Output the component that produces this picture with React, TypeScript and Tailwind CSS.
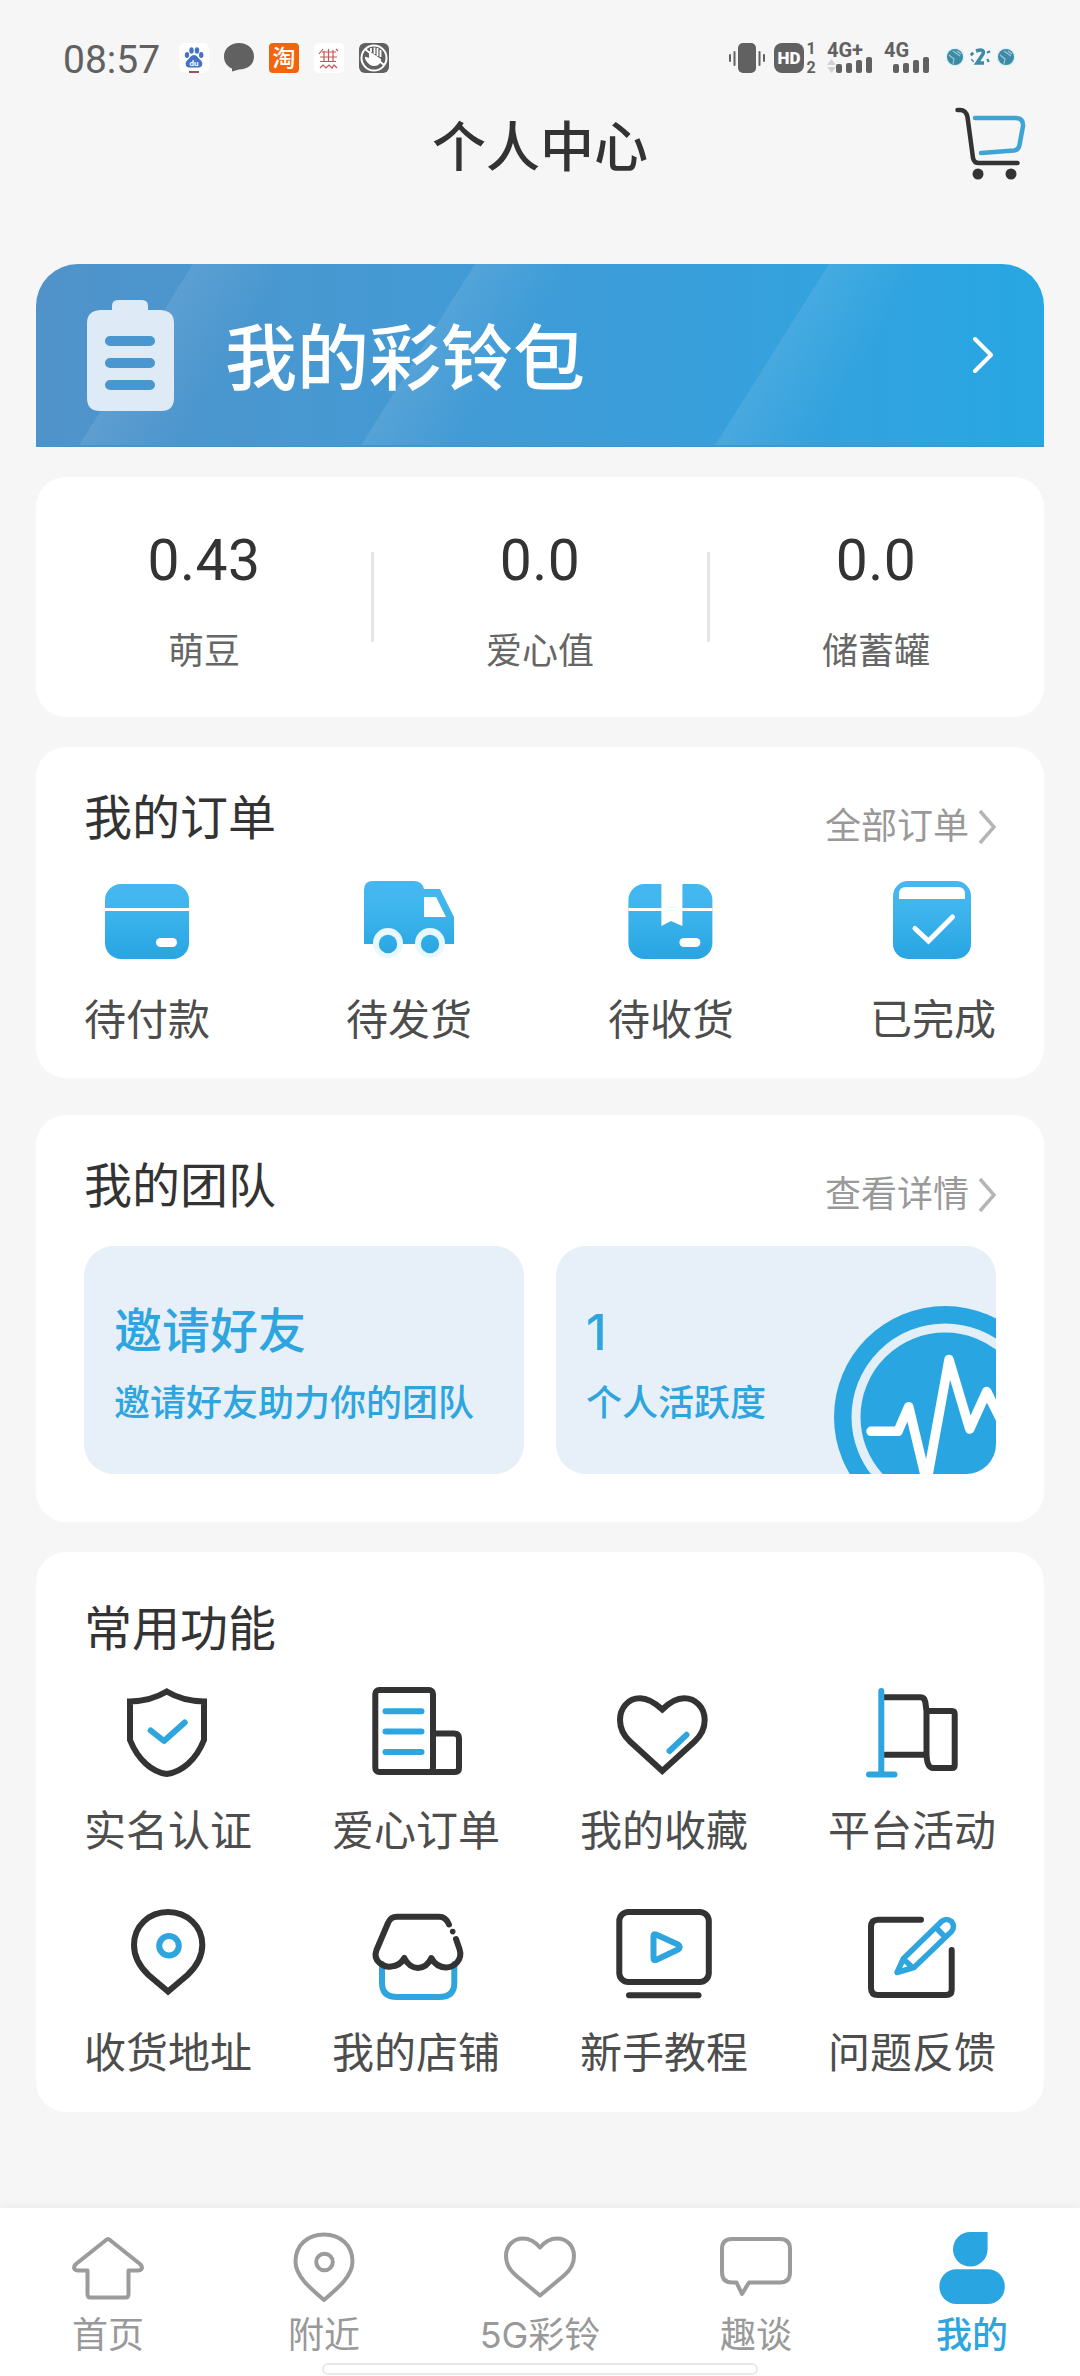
import type { ReactNode } from "react";
import clsx from "clsx";

const DARK = "#333333";
const BLUE = "#2ea5df";

interface IconItem {
  label: string;
  icon: ReactNode;
}

function LineIcon({ children }: { children: ReactNode }) {
  return (
    <svg
      viewBox="0 0 100 100"
      className="h-[100px] w-[100px]"
      fill="none"
      stroke={DARK}
      strokeWidth="6"
      strokeLinecap="round"
      strokeLinejoin="round"
    >
      {children}
    </svg>
  );
}

function OrderIcon({ children }: { children: ReactNode }) {
  return (
    <svg viewBox="0 0 90 90" className="h-[90px] w-[90px]" fill="url(#order-fill)">
      <defs>
        <linearGradient id="order-fill" gradientUnits="userSpaceOnUse" x1="0" y1="5" x2="0" y2="83">
          <stop offset="0" stopColor="#46b7f0" />
          <stop offset="0.3" stopColor="#41b6ee" />
          <stop offset="1" stopColor="#27a5e2" />
        </linearGradient>
      </defs>
      {children}
    </svg>
  );
}

function TabIcon({ children }: { children: ReactNode }) {
  return (
    <svg
      viewBox="0 0 72 72"
      className="h-[72px] w-[72px]"
      fill="none"
      stroke="#9b9b9b"
      strokeWidth="4"
      strokeLinejoin="round"
    >
      {children}
    </svg>
  );
}

const stats = [
  { value: "0.43", label: "萌豆" },
  { value: "0.0", label: "爱心值" },
  { value: "0.0", label: "储蓄罐" },
];

const orders: IconItem[] = [
  {
    label: "待付款",
    icon: (
      <OrderIcon>
        <rect x="3" y="8" width="84" height="75" rx="16" />
        <rect x="3" y="32" width="84" height="3" fill="#fff" />
        <rect x="54" y="62" width="21" height="9" rx="4.5" fill="#fff" />
      </OrderIcon>
    ),
  },
  {
    label: "待发货",
    icon: (
      <OrderIcon>
        <path d="M0 68V14Q0 5 9 5H50Q58 5 60 13H76L90 41V68Z" />
        <path d="M60 21H72L82 41H60Z" fill="#fff" />
        <circle cx="24" cy="67" r="15" fill="#e9f7fe" />
        <circle cx="66" cy="67" r="15" fill="#e9f7fe" />
        <circle cx="24" cy="68" r="9.2" />
        <circle cx="66" cy="68" r="9.2" />
      </OrderIcon>
    ),
  },
  {
    label: "待收货",
    icon: (
      <OrderIcon>
        <rect x="2.4" y="8" width="84" height="75" rx="16" />
        <rect x="2.4" y="32" width="84" height="3" fill="#fff" />
        <path d="M35.4 7H56.4V50L45 45L35.4 50Z" fill="#fff" />
        <rect x="53.4" y="62" width="21" height="9" rx="4.5" fill="#fff" />
      </OrderIcon>
    ),
  },
  {
    label: "已完成",
    icon: (
      <OrderIcon>
        <rect x="5" y="5" width="78" height="78" rx="15" />
        <path d="M11 23V18Q11 11 18 11H70Q77 11 77 18V23Z" fill="#fff" />
        <path
          d="M27 52.5L40.5 65L64.5 41"
          fill="none"
          stroke="#fff"
          strokeWidth="5"
          strokeLinecap="round"
        />
      </OrderIcon>
    ),
  },
];

const features: IconItem[] = [
  {
    label: "实名认证",
    icon: (
      <LineIcon>
        <path
          d="M48.7 11.5Q33 21 12 21.5V60C20 80 34 92 48.7 94C64 92 78 80 86 60V21.5Q64.5 21 48.7 11.5Z"
          strokeLinejoin="miter"
        />
        <path d="M32.7 50.5L46 61L66.7 42.5" stroke={BLUE} />
      </LineIcon>
    ),
  },
  {
    label: "爱心订单",
    icon: (
      <LineIcon>
        <rect x="9.3" y="10" width="57.7" height="82" rx="4" />
        <path d="M67 53.5H88Q93 53.5 93 58.5V88Q93 92 89 92H62" />
        <path d="M19.5 31.3H55.5M19.5 51.6H55.5M19.5 72H55.5" stroke={BLUE} />
      </LineIcon>
    ),
  },
  {
    label: "我的收藏",
    icon: (
      <LineIcon>
        <path
          d="M48.3 29.5C40 22 32 18.3 26 18.3C14 18.3 6 28 6 40C6 48 9 55 16 61.5L48.3 91L80.6 61.5C87.6 55 90.7 48 90.7 40C90.7 28 82 18.3 70 18.3C64 18.3 56 22 48.3 29.5Z"
          strokeLinejoin="miter"
        />
        <path d="M55.5 71L72.5 54.8" stroke={BLUE} />
      </LineIcon>
    ),
  },
  {
    label: "平台活动",
    icon: (
      <LineIcon>
        <path d="M23 17.3H58.5Q62.500 17.3 63.3 22L64.5 31V74.5Q65 88 71 88H90Q92.7 88 92.7 85V34Q92.7 31 90 31H65M23 74.7H64" />
        <path d="M19.3 11V94.5M7 94.5H32.5" stroke={BLUE} />
      </LineIcon>
    ),
  },
  {
    label: "收货地址",
    icon: (
      <LineIcon>
        <path
          d="M50 89.5L30.5 73C21 64 16 54 16 43C16 24 31 10 50 10C69 10 84.3 24 84.3 43C84.3 54 79 64 69.5 73Z"
          strokeLinejoin="miter"
        />
        <circle cx="51" cy="43.8" r="9.8" stroke={BLUE} />
      </LineIcon>
    ),
  },
  {
    label: "我的店铺",
    icon: (
      <LineIcon>
        <path d="M16 62V81Q16 95 31 95H73.3Q88.3 95 88.3 81V62" stroke={BLUE} />
        <path d="M83 22.5Q80 14.7 73 14.7H31Q24.5 14.7 22 21L10.5 48C6 60 19 65.5 25 64.5Q34 64 38.3 56Q43 65.5 52 66Q61 65.5 65.3 56Q70 65 80 65.5C88 65.5 97 58 93.5 47L90 37" />
        <circle cx="86.7" cy="29.6" r="2.8" fill={DARK} stroke="none" />
      </LineIcon>
    ),
  },
  {
    label: "新手教程",
    icon: (
      <LineIcon>
        <rect x="5.3" y="10" width="89.5" height="70" rx="9" />
        <path d="M15 93.3H84.5" />
        <path d="M42 32.5Q39.5 31.5 39.5 34V56Q39.5 59 42 58L64 47.5Q67.5 45 64 42.5Z" stroke={BLUE} />
      </LineIcon>
    ),
  },
  {
    label: "问题反馈",
    icon: (
      <LineIcon>
        <path d="M59 17.7H16Q9 17.7 9 25V86Q9 93 16 93H84Q89.7 93 89.7 88V48" />
        <path
          d="M35 70.5L41.5 56.5L79.5 19.5Q84.5 15.5 89.5 19.5Q93.5 24.5 89.5 29.5L52 65.5ZM74 25.5L83 35M43 58.5L50 65"
          stroke={BLUE}
          strokeWidth="5.5"
        />
      </LineIcon>
    ),
  },
];

const tabs = [
  {
    label: "首页",
    icon: (
      <TabIcon>
        <path d="M36 7Q35 7 33.5 8.5L4 32C0 36 3 38.5 6 38.5H15.5V62Q15.5 65.5 18.5 65.5H53.5Q56.5 65.5 56.5 62V38.5H66C69 38.5 72 36 68 32L38.5 8.5Q37 7 36 7Z" />
      </TabIcon>
    ),
  },
  {
    label: "附近",
    icon: (
      <TabIcon>
        <path d="M36 68C22 56 7.5 44 7.5 29.5C7.5 13 20 2.5 36 2.5C52 2.5 64.5 13 64.5 29.5C64.5 44 50 56 36 68Z" />
        <circle cx="36.5" cy="30" r="8.3" />
      </TabIcon>
    ),
  },
  {
    label: "5G彩铃",
    icon: (
      <TabIcon>
        <path d="M36 15.5C31 9.5 25 6.5 19 6.5C9 6.5 2 14 2 24C2 33 6 38.5 12 43.5L36 63.5L60 43.5C66 38.5 70 33 70 24C70 14 63 6.5 53 6.5C47 6.5 41 9.5 36 15.5Z" />
      </TabIcon>
    ),
  },
  {
    label: "趣谈",
    icon: (
      <TabIcon>
        <path d="M12 7H60Q70 7 70 17V40Q70 50.5 60 50.5H29L22 62L16.5 50.5H12Q2 50.5 2 40V17Q2 7 12 7Z" />
      </TabIcon>
    ),
  },
  {
    label: "我的",
    active: true,
    icon: (
      <TabIcon>
        <g fill="#29a6e2" stroke="none">
          <path d="M51.6 0V17A17.3 17.3 0 1 1 34.3 0Z" />
          <rect x="3.4" y="37.3" width="65.4" height="34.7" rx="17" />
        </g>
      </TabIcon>
    ),
  },
];

function SignalBars() {
  return (
    <div className="flex items-end gap-[4px]">
      <i className="h-[9px] w-[6px] rounded-[2px] bg-[#616161]" />
      <i className="h-[10px] w-[6px] rounded-[2px] bg-[#616161]" />
      <i className="h-[13px] w-[6px] rounded-[2px] bg-[#616161]" />
      <i className="h-[16px] w-[6px] rounded-[2px] bg-[#616161]" />
    </div>
  );
}

function StatusBar() {
  return (
    <div className="flex h-[90px] items-start justify-between pt-[43px] pr-[60px] pl-[63px] text-[#616161]">
      <div className="flex gap-[15px]">
        <span className="mr-[5px] w-[96px] text-[39px] leading-[35px]">08:57</span>
        <svg viewBox="0 0 30 30" className="h-[30px] w-[30px]">
          <rect width="30" height="30" rx="6" fill="#fff" />
          <g fill="#4472c4">
            <ellipse cx="8" cy="12" rx="2.2" ry="3" />
            <ellipse cx="12.5" cy="7.5" rx="2.2" ry="3.2" />
            <ellipse cx="18" cy="7.5" rx="2.2" ry="3.2" />
            <ellipse cx="22.2" cy="12" rx="2.2" ry="3" />
            <path d="M15 12C18 12 19 15 21.5 17C25 20 23 25 19.5 24.5H10.5C7 25 5 20 8.5 17C11 15 12 12 15 12Z" />
          </g>
          <text x="15" y="22.5" fontSize="8" fontWeight="700" textAnchor="middle" fill="#fff">du</text>
          <rect x="10" y="28" width="10" height="2" fill="#a0525c" />
        </svg>
        <svg viewBox="0 0 30 30" className="h-[30px] w-[30px]" fill="#616161">
          <path d="M15 0C23.5 0 30 5.5 30 13.5C30 21.5 23.5 26.5 15 26.5L8 28.5V25.5C3 23.5 0 19 0 13.5C0 5.5 6.500 0 15 0Z" />
        </svg>
        <div className="flex h-[30px] w-[30px] items-center justify-center rounded-[4px] bg-[#f4640a] pt-[2px] text-[23px] leading-[28px] font-medium text-white">
          淘
        </div>
        <svg viewBox="0 0 30 30" className="h-[30px] w-[30px]">
          <rect width="30" height="30" rx="5" fill="#fff" />
          <g fill="none" stroke="#c8545a" strokeWidth="1.2">
            <path d="M9 6L5 11M8 9H22M6 14H23M6 18.5H22M10 8V18M14.5 6V19M19 7V19M22 6L24 8" />
            <path d="M6 25L9 22L12 25L15 22L18 25L20 22L23 25" />
          </g>
        </svg>
        <svg viewBox="0 0 30 30" className="h-[30px] w-[30px]" fill="none" stroke="#fff">
          <rect width="30" height="30" rx="6" fill="#616161" stroke="none" />
          <circle cx="15" cy="15" r="12.5" strokeWidth="2" />
          <path d="M10 13C11 17 7 13 6 14C5 16 10 23 15 23C20 23 22 20 22 16L10 8Z" fill="#fff" stroke="none" />
          <path d="M12 9V5M15.5 11V4.5M18.5 13V5M21.5 14V7M6 6L25 22" strokeWidth="1.8" />
        </svg>
      </div>

      <div className="flex w-[291px]">
        <svg viewBox="0 0 36 30" className="h-[30px] w-[36px]" fill="#616161">
          <rect x="9" width="18" height="30" rx="5" />
          <rect x="0" y="11" width="2" height="8" rx="1" />
          <rect x="4.5" y="8" width="2" height="15" rx="1" />
          <rect x="29.5" y="8" width="2" height="15" rx="1" />
          <rect x="34" y="11" width="2" height="8" rx="1" />
        </svg>
        <div className="ml-[9px] flex h-[30px] w-[30px] items-center justify-center rounded-[8px] bg-[#616161] text-[17px] leading-none font-black text-white">
          HD
        </div>
        <div className="-mt-[4px] ml-[2px] flex w-[10px] flex-col items-center text-[16px] leading-[19px] font-bold">
          <span>1</span>
          <span>2</span>
        </div>
        <div className="ml-[11px] flex h-[30px] w-[46px] flex-col justify-between">
          <span className="text-[20px] leading-[14px] font-bold">4G+</span>
          <div className="flex items-end justify-between pr-[1px]">
            <svg viewBox="0 0 9 14" className="h-[14px] w-[9px]" fill="#d2d2d2">
              <path d="M4.5 0L9 6H0ZM4.5 14L9 8H0Z" />
            </svg>
            <SignalBars />
          </div>
        </div>
        <div className="ml-[11px] flex h-[30px] w-[45px] flex-col justify-between">
          <span className="text-[20px] leading-[14px] font-bold">4G</span>
          <div className="flex justify-end">
            <SignalBars />
          </div>
        </div>
        <svg viewBox="0 0 72 30" className="ml-[16px] h-[30px] w-[72px]" fill="none">
          <circle cx="10" cy="14" r="9.5" fill="#daf1f5" />
          <circle cx="10" cy="14" r="8" fill="#3d8aa5" />
          <circle cx="61" cy="14" r="9.5" fill="#daf1f5" />
          <circle cx="61" cy="14" r="8" fill="#3d8aa5" />
          <path
            d="M4 12L9 16L8 21M8 8L15 13M12 8L16 11M55 12L60 16L59 21M59 8L66 13M63 8L67 11"
            stroke="#9cc8d4"
            strokeWidth="1.2"
          />
          <path d="M31 8Q40 5 38 11L32 20H39M43 8L44 10M42 18L44 17M26 10L28 12M27 18L28 17" stroke="#3d8aa5" strokeWidth="3.5" />
        </svg>
      </div>
    </div>
  );
}

function CartIcon() {
  return (
    <svg
      viewBox="0 0 80 80"
      className="h-[80px] w-[80px]"
      fill="none"
      strokeWidth="4.5"
      strokeLinecap="round"
      strokeLinejoin="round"
    >
      <path d="M7.5 6H10Q16 6 17.5 13L23 54Q24 59 29 59H67.5" stroke={DARK} />
      <path d="M25 14H66Q73.5 14.5 73 22L69.5 41Q68.5 46 64 46.5L31 49" stroke="#3ea4d6" />
      <circle cx="28" cy="70" r="5.5" fill={DARK} />
      <circle cx="61" cy="70" r="5.5" fill={DARK} />
    </svg>
  );
}

function RingtoneBanner() {
  return (
    <div className="relative flex h-[183px] items-center overflow-hidden rounded-t-[42px] border-b-2 border-[#4298cc] bg-linear-to-r from-[#5093ca] via-[#3a9eda] via-60% to-[#27a7e3]">
      <svg viewBox="0 0 1008 183" className="absolute inset-0 h-[183px] w-[1008px]">
        <defs>
          <linearGradient id="shine" gradientUnits="userSpaceOnUse" x1="57.5" y1="91.5" x2="127" y2="135">
            <stop offset="0" stopColor="#fff" stopOpacity="0.09" />
            <stop offset="1" stopColor="#fff" stopOpacity="0" />
          </linearGradient>
        </defs>
        {[42, 324, 678].map((x) => (
          <path key={x} d="M115 0L0 183H200L315 0Z" transform={`translate(${x} 0)`} fill="url(#shine)" />
        ))}
      </svg>
      <svg viewBox="0 0 88 112" className="relative mt-[2px] ml-[51px] h-[112px] w-[88px]">
        <path
          d="M8 10H25V6Q25 0 31 0H55Q61 0 61 6V10H74Q87 11 87 23V98Q87 111 74 111H13Q0 111 0 98V23Q0 11 13 10Z"
          fill="#deeaf5"
        />
        <path d="M23 41H63M23 63H63M23 85H63" stroke="#4a97d0" strokeWidth="10" strokeLinecap="round" />
      </svg>
      <span className="relative ml-[50px] pt-[11px] text-[72px] leading-[90px] font-medium text-white">
        我的彩铃包
      </span>
      <svg viewBox="0 0 20 40" className="relative mr-[51px] ml-auto h-[40px] w-[20px]" fill="none">
        <path d="M2 4L18 20L2 36" stroke="#fff" strokeWidth="4" strokeLinecap="round" strokeLinejoin="round" />
      </svg>
    </div>
  );
}

function SectionHeader({ title, link }: { title: string; link?: string }) {
  return (
    <div className="flex h-[60px] justify-between">
      <h2 className="text-[48px] leading-[60px] text-[#333]">{title}</h2>
      {link && (
        <div className="flex items-center gap-[9px] pt-[16px] text-[36px] leading-[44px] text-[#999]">
          {link}
          <svg viewBox="0 0 18 36" className="h-[36px] w-[18px]" fill="none">
            <path d="M2 2L16 18L2 34" stroke="#b5b5b5" strokeWidth="3.5" />
          </svg>
        </div>
      )}
    </div>
  );
}

function TeamCards() {
  return (
    <div className="mt-[29px] grid h-[228px] grid-cols-2 gap-8 text-[#2ea5df]">
      <div className="rounded-[30px] bg-[#e7f0f8] pt-[56px] pl-[30px] font-medium">
        <p className="text-[48px] leading-[60px]">邀请好友</p>
        <p className="mt-[18px] text-[36px] leading-[48px]">邀请好友助力你的团队</p>
      </div>
      <div className="relative overflow-hidden rounded-[30px] bg-[#e7f0f8] pt-[56px] pl-[30px] font-medium">
        <svg viewBox="0 0 440 228" className="absolute inset-0 h-[228px] w-[440px]" fill="none">
          <circle cx="389" cy="171" r="111" fill="#29a6e1" />
          <circle cx="389" cy="171" r="89" stroke="#e2eff9" strokeWidth="9" />
          <path
            d="M315 185.3H342L352.7 160.7L370.7 236L393 113.5L413.7 183L430.7 145.5L446 176"
            stroke="#fff"
            strokeWidth="9.5"
            strokeLinecap="round"
            strokeLinejoin="round"
          />
        </svg>
        <p className="relative font-[Inter] text-[50px] leading-[60px]">1</p>
        <p className="relative mt-[18px] text-[36px] leading-[48px]">个人活跃度</p>
      </div>
    </div>
  );
}

function TabBar() {
  return (
    <nav className="mt-auto h-[168px] bg-white pt-[24px] shadow-[0_-3px_8px_rgba(0,0,0,0.04)]">
      <div className="grid grid-cols-5 font-[Inter,'Noto_Sans_CJK_SC',sans-serif]">
        {tabs.map((tab) => (
          <div
            key={tab.label}
            className={clsx(
              "flex flex-col items-center text-[36px] leading-[48px]",
              tab.active ? "font-medium text-[#2ea5df]" : "text-[#999]"
            )}
          >
            {tab.icon}
            <span className="mt-[7px]">{tab.label}</span>
          </div>
        ))}
      </div>
      <div className="mx-auto mt-[4px] h-[12px] w-[436px] rounded-full border-2 border-[#e8e8e8] bg-white" />
    </nav>
  );
}

export default function App() {
  return (
    <div className="flex h-[2376px] w-[1080px] flex-col overflow-hidden bg-[#f6f6f6] font-[Roboto,'Noto_Sans_CJK_SC',sans-serif]">
      <StatusBar />
      <header className="grid h-[108px] grid-cols-3 items-center px-[50px]">
        <h1 className="col-start-2 pt-[9px] text-center text-[54px] leading-[64px] font-medium text-[#333]">
          个人中心
        </h1>
        <div className="flex justify-end">
          <CartIcon />
        </div>
      </header>

      <main className="px-9 pt-[66px]">
        <RingtoneBanner />

        <section className="mt-[30px] grid h-[240px] grid-cols-3 rounded-[30px] bg-white">
          {stats.map((stat, i) => (
            <div key={stat.label} className="flex">
              <div className="flex flex-1 flex-col items-center pt-[54px]">
                <span className="text-[57px] leading-[60px] tracking-[0.5px] text-[#333]">{stat.value}</span>
                <span className="mt-[39px] text-[36px] leading-[44px] text-[#666]">{stat.label}</span>
              </div>
              {i < stats.length - 1 && <div className="mt-[75px] -mr-[2px] -ml-[1px] h-[90px] w-[3px] bg-[#e5e5e5]" />}
            </div>
          ))}
        </section>

        <section className="mt-[30px] h-[331px] rounded-[30px] bg-white px-12 pt-[42px]">
          <SectionHeader title="我的订单" link="全部订单" />
          <div className="mt-[27px] flex justify-between">
            {orders.map((item) => (
              <div key={item.label} className="flex flex-col items-center">
                {item.icon}
                <span className="mt-[25px] text-[42px] leading-[60px] text-[#4d4d4d]">{item.label}</span>
              </div>
            ))}
          </div>
        </section>

        <section className="mt-[37px] h-[407px] rounded-[30px] bg-white px-12 pt-[42px]">
          <SectionHeader title="我的团队" link="查看详情" />
          <TeamCards />
        </section>

        <section className="mt-[30px] h-[560px] rounded-[30px] bg-white px-12 pt-[48px]">
          <SectionHeader title="常用功能" />
          <div className="mt-[20px] grid grid-cols-[repeat(4,168px)] justify-between gap-y-[40px]">
            {features.map((item) => (
              <div key={item.label} className="flex flex-col items-center">
                {item.icon}
                <span className="mt-[22px] text-[42px] leading-[60px] text-[#4d4d4d]">{item.label}</span>
              </div>
            ))}
          </div>
        </section>
      </main>

      <TabBar />
    </div>
  );
}
